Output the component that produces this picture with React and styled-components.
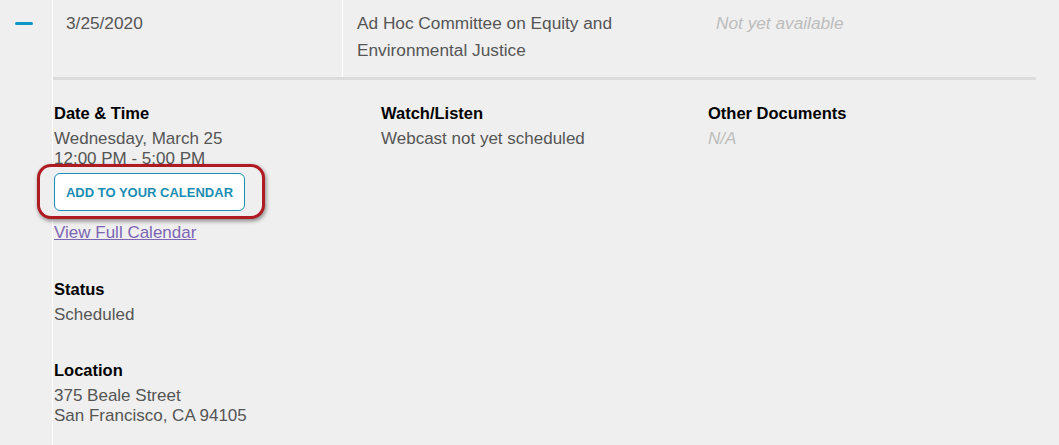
import styled, { createGlobalStyle } from 'styled-components';

const GlobalStyle = createGlobalStyle`
  html, body {
    margin: 0;
    padding: 0;
    background: #efefef;
  }
  body {
    font-family: 'Liberation Sans', Arial, sans-serif;
    font-size: 17px;
    color: #555;
  }
`;

export default function App() {
  return (
    <>
      <GlobalStyle />
      <Page>
        <Gutter>
          <Collapse aria-label="collapse" />
        </Gutter>
        <Main>
          <SummaryRow>
            <Cell width="289px" pad="13px">3/25/2020</Cell>
            <Cell width="360px" pad="14px" divided>
              Ad Hoc Committee on Equity and
              <br />
              Environmental Justice
            </Cell>
            <Cell pad="14px" muted>Not yet available</Cell>
          </SummaryRow>
          <Divider />
          <Details>
            <Column>
              <Section>
                <Heading>Date &amp; Time</Heading>
                <Value>Wednesday, March 25</Value>
                <Value>12:00 PM - 5:00 PM</Value>
                <ButtonWrap>
                  <Highlight />
                  <CalendarButton>ADD TO YOUR CALENDAR</CalendarButton>
                </ButtonWrap>
                <CalendarLink href="#">View Full Calendar</CalendarLink>
              </Section>
              <Section>
                <Heading>Status</Heading>
                <Value>Scheduled</Value>
              </Section>
              <Section>
                <Heading>Location</Heading>
                <Value>375 Beale Street</Value>
                <Value>San Francisco, CA 94105</Value>
              </Section>
            </Column>
            <Column>
              <Section>
                <Heading>Watch/Listen</Heading>
                <Value>Webcast not yet scheduled</Value>
              </Section>
            </Column>
            <Column>
              <Section>
                <Heading>Other Documents</Heading>
                <Value muted>N/A</Value>
              </Section>
            </Column>
          </Details>
        </Main>
      </Page>
    </>
  );
}

const Page = styled.div`
  display: flex;
  min-height: 445px;
  overflow: hidden;
`;

const Gutter = styled.div`
  width: 52px;
  flex-shrink: 0;
  padding-top: 22px;
  padding-left: 15px;
  box-sizing: border-box;
`;

const Collapse = styled.button`
  display: block;
  width: 18px;
  height: 3px;
  padding: 0;
  border: none;
  border-radius: 2px;
  background: #0b96c5;
`;

const Main = styled.div`
  flex: 1;
  border-left: 1px solid #ffffff;
  padding-right: 23px;
`;

const SummaryRow = styled.div`
  display: flex;
  height: 77px;
  font-size: 17.25px;
`;

const Cell = styled.div`
  width: ${props => props.width || 'auto'};
  flex: ${props => (props.width ? 'none' : '1')};
  box-sizing: border-box;
  padding: 10px 0 0 ${props => props.pad};
  line-height: 27px;
  color: ${props => (props.muted ? '#bdbdbd' : '#555')};
  font-style: ${props => (props.muted ? 'italic' : 'normal')};
  border-left: ${props => (props.divided ? '1px solid #ffffff' : 'none')};
`;

const Divider = styled.hr`
  margin: 0;
  border: none;
  height: 3px;
  background: #dcdcdc;
`;

const Details = styled.div`
  display: grid;
  grid-template-columns: 327px 327px 1fr;
  padding: 23px 0 0 1px;
`;

const Column = styled.div`
  display: flex;
  flex-direction: column;
  gap: 35px;
`;

const Section = styled.div`
  display: flex;
  flex-direction: column;
  align-items: flex-start;
`;

const Heading = styled.h3`
  margin: 0 0 6px;
  font-size: 16.5px;
  line-height: 20px;
  font-weight: 700;
  color: #000;
`;

const Value = styled.div`
  line-height: 20px;
  color: ${props => (props.muted ? '#bdbdbd' : '#555')};
  font-style: ${props => (props.muted ? 'italic' : 'normal')};
`;

const ButtonWrap = styled.div`
  position: relative;
  margin-top: 4px;
`;

const Highlight = styled.div`
  position: absolute;
  top: -9px;
  left: -17px;
  right: -20px;
  bottom: -8px;
  border: 3px solid #b01a22;
  border-radius: 14px;
  background: #efefef;
  box-shadow: 1px 2px 4px rgba(0, 0, 0, 0.45);
`;

const CalendarButton = styled.button`
  position: relative;
  display: block;
  width: 191px;
  height: 38px;
  padding: 0;
  background: #fff;
  border: 1px solid #1a8db3;
  border-radius: 6px;
  color: #1a8db3;
  font-family: inherit;
  font-size: 13px;
  font-weight: 700;
`;

const CalendarLink = styled.a`
  margin: 12px 0 1px;
  line-height: 20px;
  color: #7c66b4;
  text-decoration: underline;
`;
